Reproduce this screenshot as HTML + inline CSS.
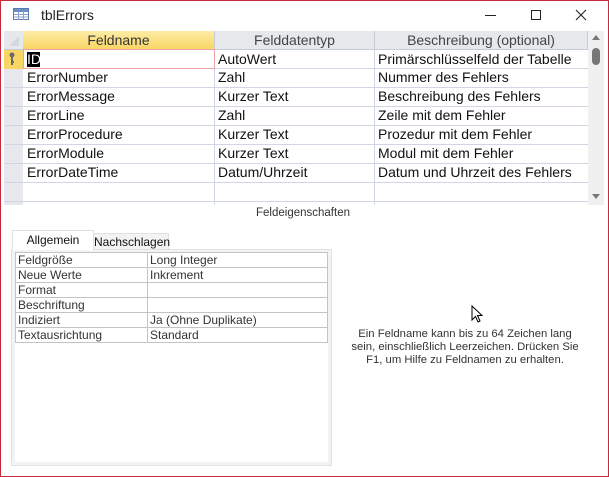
<!DOCTYPE html>
<html><head><meta charset="utf-8"><style>
*{margin:0;padding:0;box-sizing:border-box}
body{width:609px;height:477px;overflow:hidden;background:#fff;font-family:"Liberation Sans",sans-serif;position:relative}
.win{position:absolute;left:0;top:0;width:609px;height:477px;border:1px solid #c42b3c}
.abs{position:absolute}
.t{font-size:13px;color:#222;white-space:nowrap}
.hdr{background:#e6e8ec;color:#444;font-size:14px;text-align:center;line-height:18px;border-right:1px solid #c6ccd6}
.cell{position:absolute;font-size:14px;line-height:19px;color:#111;padding-left:4px;white-space:nowrap}
.hl{position:absolute;height:1px;background:#d0d7e3}
.vl{position:absolute;width:1px;background:#d0d7e3}
.pt td{border:1px solid #c4c4c4;font-size:12px;color:#333;height:15px;padding:0 2px;line-height:13px;white-space:nowrap}
</style></head><body>
<div class="win"></div>
<svg class="abs" style="left:13px;top:8px" width="17" height="13"><rect x="0.5" y="0.5" width="15" height="11" fill="#fff" stroke="#5a7bb0"/><rect x="1" y="1" width="14" height="3" fill="#6e8fc4"/><path d="M1 6.5h14M1 9h14M5.5 4v8M10.5 4v8" stroke="#8aa3cc"/></svg>
<div class="abs t" style="left:41px;top:7px;font-size:14px">tblErrors</div>
<div class="abs" style="left:485px;top:15px;width:11px;height:1px;background:#222"></div>
<div class="abs" style="left:531px;top:10px;width:10px;height:10px;border:1px solid #222"></div>
<svg class="abs" style="left:575px;top:9px" width="12" height="12"><path d="M1 1L11 11M11 1L1 11" stroke="#222" stroke-width="1.1"/></svg>
<div class="abs" style="left:4px;top:31px;width:584px;height:174px;background:#fff"></div>
<div class="abs" style="left:4px;top:31px;width:19px;height:174px;background:#e6e8ec"></div>
<svg class="abs" style="left:8px;top:35px" width="12" height="12"><path d="M11 1L1 11H11Z" fill="#d4d7dd"/></svg>
<div class="abs hdr" style="left:23px;top:31px;width:192px;height:18px;background:linear-gradient(#fdeca6,#f9d663);color:#333">Feldname</div>
<div class="abs hdr" style="left:215px;top:31px;width:160px;height:18px">Felddatentyp</div>
<div class="abs hdr" style="left:375px;top:31px;width:213px;height:18px">Beschreibung (optional)</div>
<div class="abs" style="left:4px;top:50px;width:19px;height:19px;background:#f9d663"></div>
<svg class="abs" style="left:8px;top:52px" width="8" height="14"><circle cx="4" cy="3" r="2.5" fill="#6a6a6a"/><path d="M3 5v8h2v-2h1v-2h-1v-4z" fill="#6a6a6a"/></svg>
<div class="hl" style="left:4px;top:49px;width:584px;background:#c6ccd6"></div>
<div class="hl" style="left:23px;top:68px;width:565px"></div>
<div class="hl" style="left:4px;top:87px;width:584px"></div>
<div class="hl" style="left:4px;top:106px;width:584px"></div>
<div class="hl" style="left:4px;top:125px;width:584px"></div>
<div class="hl" style="left:4px;top:144px;width:584px"></div>
<div class="hl" style="left:4px;top:163px;width:584px"></div>
<div class="hl" style="left:4px;top:182px;width:584px"></div>
<div class="hl" style="left:4px;top:201px;width:584px"></div>
<div class="vl" style="left:214px;top:49px;height:156px"></div>
<div class="vl" style="left:374px;top:49px;height:156px"></div>
<div class="abs" style="left:23px;top:49px;width:192px;height:20px;border:1px solid #f0a0a8"></div>
<div class="abs" style="left:27px;top:52px;width:13px;height:15px;background:#000"></div>
<div class="cell" style="left:23px;top:50px;color:#fff">ID</div>
<div class="cell" style="left:214px;top:50px">AutoWert</div>
<div class="cell" style="left:374px;top:50px">Primärschlüsselfeld der Tabelle</div>
<div class="cell" style="left:23px;top:68px">ErrorNumber</div><div class="cell" style="left:214px;top:68px">Zahl</div><div class="cell" style="left:374px;top:68px">Nummer des Fehlers</div>
<div class="cell" style="left:23px;top:87px">ErrorMessage</div><div class="cell" style="left:214px;top:87px">Kurzer Text</div><div class="cell" style="left:374px;top:87px">Beschreibung des Fehlers</div>
<div class="cell" style="left:23px;top:106px">ErrorLine</div><div class="cell" style="left:214px;top:106px">Zahl</div><div class="cell" style="left:374px;top:106px">Zeile mit dem Fehler</div>
<div class="cell" style="left:23px;top:125px">ErrorProcedure</div><div class="cell" style="left:214px;top:125px">Kurzer Text</div><div class="cell" style="left:374px;top:125px">Prozedur mit dem Fehler</div>
<div class="cell" style="left:23px;top:144px">ErrorModule</div><div class="cell" style="left:214px;top:144px">Kurzer Text</div><div class="cell" style="left:374px;top:144px">Modul mit dem Fehler</div>
<div class="cell" style="left:23px;top:163px">ErrorDateTime</div><div class="cell" style="left:214px;top:163px">Datum/Uhrzeit</div><div class="cell" style="left:374px;top:163px">Datum und Uhrzeit des Fehlers</div>
<div class="abs" style="left:588px;top:31px;width:16px;height:174px;background:#f0f0f0"></div>
<svg class="abs" style="left:591px;top:34px" width="10" height="8"><path d="M1 6L5 1L9 6Z" fill="#777"/></svg>
<div class="abs" style="left:592px;top:48px;width:8px;height:17px;border-radius:4px;background:#777"></div>
<svg class="abs" style="left:591px;top:193px" width="10" height="8"><path d="M1 1L5 6L9 1Z" fill="#777"/></svg>
<div class="abs t" style="left:256px;top:207px;font-size:11.5px;color:#333">Feldeigenschaften</div>
<div class="abs" style="left:11px;top:249px;width:321px;height:217px;border:1px solid #e2e2e2;box-shadow:inset 0 0 0 3px #f3f3f3;background:#fff"></div>
<div class="abs" style="left:93px;top:233px;width:76px;height:17px;background:#f3f3f3;border:1px solid #e0e0e0;font-size:12px;line-height:16px;text-align:center;color:#111">Nachschlagen</div>
<div class="abs" style="left:12px;top:230px;width:82px;height:20px;background:#fff;border:1px solid #e0e0e0;border-bottom:none;font-size:12px;line-height:18px;text-align:center;color:#111">Allgemein</div>
<table class="pt abs" style="left:15px;top:252px;width:313px;border-collapse:collapse">
<tr><td style="width:132px">Feldgröße</td><td>Long Integer</td></tr>
<tr><td>Neue Werte</td><td>Inkrement</td></tr>
<tr><td>Format</td><td></td></tr>
<tr><td>Beschriftung</td><td></td></tr>
<tr><td>Indiziert</td><td>Ja (Ohne Duplikate)</td></tr>
<tr><td>Textausrichtung</td><td>Standard</td></tr>
</table>
<div class="abs" style="left:345px;top:328px;width:240px;font-size:11.3px;line-height:13px;color:#333;text-align:center">Ein Feldname kann bis zu 64 Zeichen lang sein, einschließlich Leerzeichen. Drücken Sie F1, um Hilfe zu Feldnamen zu erhalten.</div>
<svg class="abs" style="left:471px;top:305px" width="12" height="19"><path d="M1 1V15L4.5 11.5L7 17L9 16L6.5 10.5H11Z" fill="#fff" stroke="#000" stroke-width="1"/></svg>
</body></html>
